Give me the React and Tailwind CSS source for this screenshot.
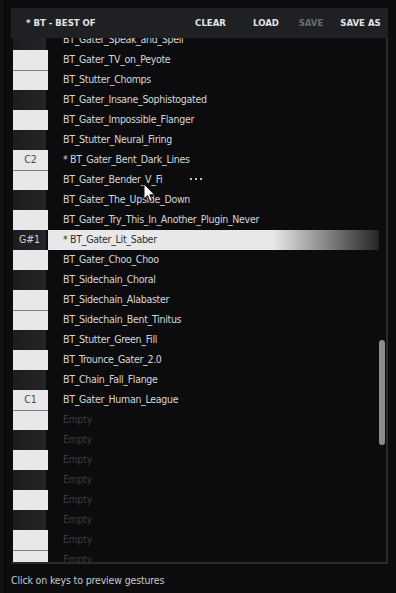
import React from "react";

// one entry per semitone row, top to bottom (first row is half hidden under the header)
const rows = [
  { note: "F#2", black: true, name: "BT_Gater_Speak_and_Spell" },
  { note: "F2", name: "BT_Gater_TV_on_Peyote" },
  { note: "E2", line: true, name: "BT_Stutter_Chomps" },
  { note: "D#2", black: true, name: "BT_Gater_Insane_Sophistogated" },
  { note: "D2", name: "BT_Gater_Impossible_Flanger" },
  { note: "C#2", black: true, name: "BT_Stutter_Neural_Firing" },
  { note: "C2", label: true, name: "* BT_Gater_Bent_Dark_Lines" },
  { note: "B1", line: true, name: "BT_Gater_Bender_V_Fi", dots: true },
  { note: "A#1", black: true, name: "BT_Gater_The_Upside_Down" },
  { note: "A1", name: "BT_Gater_Try_This_In_Another_Plugin_Never" },
  { note: "G#1", black: true, label: true, active: true, name: "* BT_Gater_Lit_Saber" },
  { note: "G1", name: "BT_Gater_Choo_Choo" },
  { note: "F#1", black: true, name: "BT_Sidechain_Choral" },
  { note: "F1", name: "BT_Sidechain_Alabaster" },
  { note: "E1", line: true, name: "BT_Sidechain_Bent_Tinitus" },
  { note: "D#1", black: true, name: "BT_Stutter_Green_Fill" },
  { note: "D1", name: "BT_Trounce_Gater_2.0" },
  { note: "C#1", black: true, name: "BT_Chain_Fall_Flange" },
  { note: "C1", label: true, name: "BT_Gater_Human_League" },
  { note: "B0", line: true },
  { note: "A#0", black: true },
  { note: "A0" },
  { note: "G#0", black: true },
  { note: "G0" },
  { note: "F#0", black: true },
  { note: "F0" },
  { note: "E0", line: true },
  { note: "D#0", black: true },
];

function Key({ row }) {
  if (row.black) {
    return (
      <div className="w-[35px] h-[20px] flex">
        <div className="w-[33px] h-full bg-gradient-to-r from-[#1d1d1f] to-[#252527] flex items-center justify-center text-[10.5px] text-[#cfcfd1]">
          {row.label ? row.note : ""}
        </div>
      </div>
    );
  }
  return (
    <div
      className={`w-[35px] h-[20px] bg-[#e8e8ea] flex items-center justify-center text-[10.5px] text-[#4a4a4c] ${
        row.line ? "border-t border-[#7c7c7e]" : ""
      }`}
    >
      {row.label ? row.note : ""}
    </div>
  );
}

function Row({ row }) {
  return (
    <div className="flex h-[20px]">
      <Key row={row} />
      <div className="relative flex-1 h-full">
        {row.active && (
          <div className="absolute left-0 top-0 h-full w-[331px] bg-[linear-gradient(to_right,#e8e8ea_0%,#e8e8ea_68%,#242426_100%)]" />
        )}
        <div
          className={`relative h-full flex items-center pl-[15px] text-[10.5px] tracking-[-0.3px] whitespace-nowrap ${
            row.active ? "text-[#2e2e30]" : row.name ? "text-[#d6d6d8]" : "text-[#3a3a3d]"
          }`}
        >
          {row.name || "Empty"}
        </div>
        {row.dots && (
          <div className="absolute left-[142px] top-[8px] flex gap-[3px]">
            <div className="w-[2px] h-[2px] rounded-full bg-white" />
            <div className="w-[2px] h-[2px] rounded-full bg-white" />
            <div className="w-[2px] h-[2px] rounded-full bg-white" />
          </div>
        )}
      </div>
    </div>
  );
}

export default function App() {
  return (
    <div className="relative w-[396px] h-[593px] overflow-hidden bg-[#0c0c0e] border-l-[3px] border-[#131315] [font-family:'Liberation_Sans_Narrow','DejaVu_Sans_Condensed','Liberation_Sans',sans-serif]">
      <div className="pt-2 pl-[8px]">
        {/* toolbar */}
        <div className="w-[377px] h-[30px] bg-[#1f2023] flex items-center pl-[15px] text-[9.5px] font-bold text-[#e4e4e6] whitespace-nowrap">
          <span className="w-[164px]">* BT - BEST OF</span>
          <span className="w-[41px] text-center">CLEAR</span>
          <span className="w-[40px] ml-[15px] text-center">LOAD</span>
          <span className="w-[40px] ml-[5px] text-center text-[#6c6c6e]">SAVE</span>
          <span className="w-[45px] ml-[7px] text-center">SAVE AS</span>
        </div>

        {/* key + preset list */}
        <div className="relative w-[377px] h-[526px] border-r-2 border-b-2 border-[#2a2a2d] overflow-hidden">
          <div className="pl-[2px] -mt-[8px]">
            {rows.map((r) => (
              <Row key={r.note} row={r} />
            ))}
          </div>
          <div className="absolute left-[368px] top-[302px] w-[6px] h-[105px] rounded-full bg-[#8b8b8d]" />
        </div>
      </div>

      <div className="pl-[8px] pt-[9px] text-[10.5px] tracking-[-0.15px] text-[#c8c8ca] whitespace-nowrap">
        Click on keys to preview gestures
      </div>

      {/* mouse pointer */}
      <svg className="absolute left-[140px] top-[183px]" width="13" height="20" viewBox="0 0 13 20">
        <path d="M1 1 L1 16 L4.5 12.5 L7 18.5 L9.3 17.5 L6.8 11.8 L11.5 11.8 Z" fill="#ffffff" stroke="#111" strokeWidth="1" />
      </svg>
    </div>
  );
}
